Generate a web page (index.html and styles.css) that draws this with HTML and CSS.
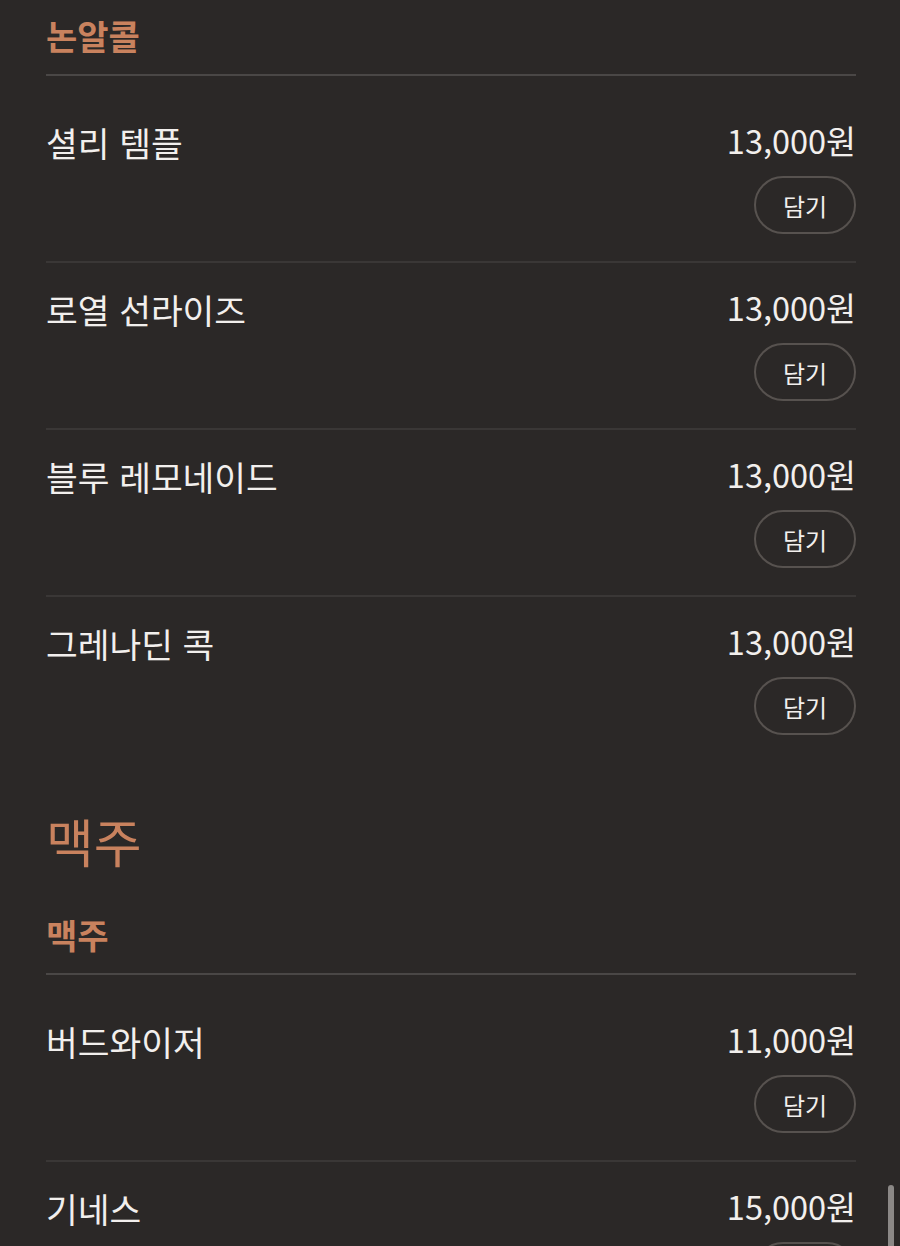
FILE: index.html
```html
<!DOCTYPE html>
<html lang="ko">
<head>
<meta charset="utf-8">
<title>메뉴</title>
<link rel="stylesheet" href="styles.css">
</head>
<body>
<main class="menu">
  <section class="section">
    <div class="group">
      <h3 class="group-title">논알콜</h3>
      <ul class="items">
        <li class="item">
          <span class="name">셜리 템플</span>
          <div class="side"><span class="price">13,000원</span><button class="add">담기</button></div>
        </li>
        <li class="item">
          <span class="name">로열 선라이즈</span>
          <div class="side"><span class="price">13,000원</span><button class="add">담기</button></div>
        </li>
        <li class="item">
          <span class="name">블루 레모네이드</span>
          <div class="side"><span class="price">13,000원</span><button class="add">담기</button></div>
        </li>
        <li class="item">
          <span class="name">그레나딘 콕</span>
          <div class="side"><span class="price">13,000원</span><button class="add">담기</button></div>
        </li>
      </ul>
    </div>
  </section>
  <section class="section">
    <h2 class="section-title">맥주</h2>
    <div class="group">
      <h3 class="group-title">맥주</h3>
      <ul class="items">
        <li class="item">
          <span class="name">버드와이저</span>
          <div class="side"><span class="price">11,000원</span><button class="add">담기</button></div>
        </li>
        <li class="item">
          <span class="name">기네스</span>
          <div class="side"><span class="price">15,000원</span><button class="add">담기</button></div>
        </li>
      </ul>
    </div>
  </section>
</main>
<div class="scrollbar"></div>
</body>
</html>
```
FILE: styles.css
```css
html {
  overflow: hidden;
}
body {
  margin: 0;
  background: #2b2827;
  color: #f2efed;
  font-family: "Noto Sans CJK KR", "Noto Sans", sans-serif;
}
.menu {
  padding: 0 44px 0 46px;
}
.section + .section {
  margin-top: 49px;
}
.section-title {
  margin: 0 0 28px;
  font-size: 52px;
  font-weight: 400;
  line-height: 60px;
  color: #c9825e;
}
.group-title {
  margin: 0;
  padding: 16px 0 18px;
  font-size: 34px;
  font-weight: 700;
  line-height: 40px;
  color: #c9825e;
  border-bottom: 2px solid #4a4746;
}
.items {
  list-style: none;
  margin: 0;
  padding: 20px 0 0;
}
.item {
  display: flex;
  justify-content: space-between;
  align-items: flex-start;
  padding: 24px 0 27px;
  border-bottom: 2px solid #3a3736;
}
.item:last-child {
  border-bottom: none;
}
.name {
  margin-top: 2px;
  font-size: 34.5px;
  line-height: 40px;
}
.side {
  display: flex;
  flex-direction: column;
  align-items: flex-end;
  gap: 16px;
}
.price {
  font-size: 32.5px;
  line-height: 40px;
}
.add {
  width: 102px;
  height: 58px;
  border: 2px solid #57524f;
  border-radius: 29px;
  background: transparent;
  color: #f2efed;
  font-family: inherit;
  font-size: 24px;
  padding: 0;
}
.scrollbar {
  position: fixed;
  right: 6px;
  top: 1185px;
  width: 6px;
  height: 75px;
  border-radius: 3px;
  background: #8b8886;
}
```
